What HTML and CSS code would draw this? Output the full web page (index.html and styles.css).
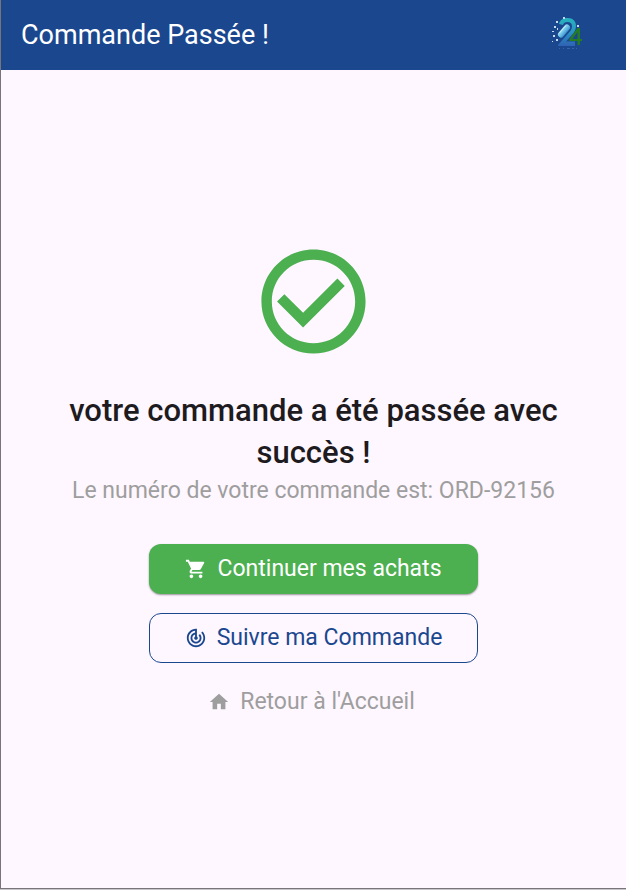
FILE: index.html
```html
<!DOCTYPE html>
<html lang="fr">
<head>
<meta charset="utf-8">
<meta name="viewport" content="width=device-width, initial-scale=1">
<title>Commande Passée !</title>
<link rel="stylesheet" href="styles.css">
</head>
<body>
<div class="app">
  <header class="app-bar">
    <h1 class="app-title">Commande Passée !</h1>
    <svg class="logo" viewBox="0 0 32 36" aria-hidden="true">
      <defs>
        <linearGradient id="two" x1="0" y1="0" x2="0" y2="1">
          <stop offset="0" stop-color="#27b5bd"/>
          <stop offset=".55" stop-color="#2b8fc4"/>
          <stop offset="1" stop-color="#2f62b4"/>
        </linearGradient>
        <linearGradient id="pill" x1="0" y1="0" x2="1" y2="1">
          <stop offset="0" stop-color="#b5e6f7"/>
          <stop offset=".5" stop-color="#6cc1e8"/>
          <stop offset="1" stop-color="#2779bd"/>
        </linearGradient>
      </defs>
      <path fill="url(#two)" d="M8 7C9 3 12 1 16.500 1C22 1 25 4.500 25 9C25 13 23 16 20 19L15 24.500H24V29H7V28L18 15.500C20.500 13 21 11 21 9C21 6.500 19 5 16.500 5C14 5 12.500 6 12 8Z"/>
      <path fill="#257d23" fill-rule="evenodd" d="M26.500 11H29V22H31V24H29V28H26.500V24H18.500V22ZM26.500 15L21.500 22H26.500Z"/>
      <path stroke="#17508f" stroke-width="7" stroke-linecap="round" d="M10 17.500L16 10.500"/>
      <path stroke="url(#pill)" stroke-width="6" stroke-linecap="round" d="M10 17.500L16 10.500"/>
      <path stroke="#c9f1fb" stroke-width="1" stroke-linecap="round" d="M8.500 16L14.500 9"/>
      <path fill="#c3d9ee" d="M12 0h2v2h-2zM5 4h2v2H5zM3 9h2v2H3zM6 11h1v2H6zM1 14h2v1H1zM2 18h2v2H2zM5 22h2v2H5zM1 24h1v1H1zM26 8h2v2h-2z"/>
      <path fill="#3765a5" d="M8 31h1v1H8zM12 31h1v1h-1zM16 31h3v1h-3zM21 31h2v1h-2zM25 31h1v1h-1z"/>
    </svg>
  </header>
  <main class="content">
    <svg class="success-icon" viewBox="0 0 24 24" aria-hidden="true"><path d="M16.590 7.580L10 14.170l-3.590-3.580L5 12l5 5 8-8zM12 2C6.480 2 2 6.480 2 12s4.480 10 10 10 10-4.480 10-10S17.520 2 12 2zm0 18c-4.420 0-8-3.580-8-8s3.580-8 8-8 8 3.580 8 8-3.580 8-8 8z"/></svg>
    <h2 class="message">votre commande a été passée avec succès !</h2>
    <p class="order">Le numéro de votre commande est: ORD-92156</p>
    <div class="actions">
      <button class="btn btn-primary" type="button">
        <svg class="icon" viewBox="0 0 24 24" aria-hidden="true"><path d="M7 18c-1.100 0-1.990.9-1.990 2S5.900 22 7 22s2-.9 2-2-.9-2-2-2zM1 2v2h2l3.600 7.590-1.350 2.450c-.16.280-.25.610-.25.960 0 1.100.9 2 2 2h12v-2H7.420c-.14 0-.25-.11-.25-.25l.03-.12.900-1.630h7.450c.75 0 1.410-.41 1.750-1.030l3.580-6.490c.08-.14.120-.31.120-.48 0-.55-.45-1-1-1H5.210l-.94-2H1zm16 16c-1.100 0-1.990.9-1.990 2s.89 2 1.990 2 2-.9 2-2-.9-2-2-2z"/></svg>
        Continuer mes achats
      </button>
      <button class="btn btn-outline" type="button">
        <svg class="icon" viewBox="0 0 24 24" aria-hidden="true"><path d="M19.070 4.930l-1.410 1.410C19.100 7.790 20 9.790 20 12c0 4.420-3.580 8-8 8s-8-3.580-8-8c0-4.080 3.050-7.440 7-7.930v2.020C8.160 6.570 6 9.030 6 12c0 3.310 2.690 6 6 6s6-2.690 6-6c0-1.660-.67-3.160-1.760-4.240l-1.410 1.410C15.550 9.900 16 10.900 16 12c0 2.210-1.790 4-4 4s-4-1.790-4-4c0-1.860 1.280-3.410 3-3.860v2.140c-.6.350-1 .98-1 1.720 0 1.100.9 2 2 2s2-.9 2-2c0-.74-.4-1.380-1-1.720V2h-1C6.480 2 2 6.480 2 12s4.480 10 10 10 10-4.480 10-10c0-2.760-1.120-5.260-2.930-7.070z"/></svg>
        Suivre ma Commande
      </button>
    </div>
    <a class="home-link" href="#">
      <svg class="icon" viewBox="0 0 24 24" aria-hidden="true"><path d="M10 20v-6h4v6h5v-8h3L12 3 2 12h3v8z"/></svg>
      Retour à l'Accueil
    </a>
  </main>
</div>
</body>
</html>
```
FILE: styles.css
```css
* {
  box-sizing: border-box;
}

body {
  margin: 0;
  background: #cac5ca;
  color: #1d1b20;
  font-family: Roboto, "Liberation Sans", sans-serif;
}

.app {
  display: flex;
  flex-direction: column;
  min-height: calc(100vh - 1px);
  border-left: 1px solid #77747a;
  border-bottom: 1px solid #77747a;
  background: #fef7ff;
}

.app-bar {
  display: flex;
  align-items: center;
  justify-content: space-between;
  height: 70px;
  padding: 0 43px 0 20px;
  background: #1b478f;
  color: #fff;
}

.app-title {
  margin: 0;
  font-size: 27px;
  font-weight: 400;
  line-height: 36px;
}

.logo {
  width: 32px;
  height: 36px;
  fill: none;
}

.content {
  display: flex;
  flex: 1;
  flex-direction: column;
  align-items: center;
  justify-content: center;
  padding: 20px 20px 21px;
  text-align: center;
}

.success-icon {
  width: 125px;
  height: 125px;
  margin-bottom: 26px;
  fill: #4caf50;
}

.message {
  max-width: 520px;
  margin: 0;
  font-size: 31px;
  font-weight: 500;
  line-height: 42px;
}

.order {
  margin: 0 0 37px;
  color: #9e9e9e;
  font-size: 23px;
  line-height: 33px;
}

.actions {
  display: grid;
  gap: 19px;
  margin-bottom: 22px;
}

.btn,
.home-link {
  display: flex;
  align-items: center;
  justify-content: center;
  gap: 10px;
  font-family: inherit;
  font-size: 23px;
  line-height: 34px;
}

.btn {
  height: 50px;
  padding: 0 35px;
  border: 0;
  border-radius: 12px;
}

.btn-primary {
  background: #4caf50;
  box-shadow: 0 1px 2px rgba(0, 0, 0, 0.4);
  color: #fff;
}

.btn-outline {
  border: 1px solid #1b478f;
  background: transparent;
  color: #1b478f;
}

.home-link {
  padding: 0 16px 0 12px;
  color: #9e9e9e;
  text-decoration: none;
}

.icon {
  flex: none;
  width: 22px;
  height: 22px;
  fill: currentColor;
}
```
